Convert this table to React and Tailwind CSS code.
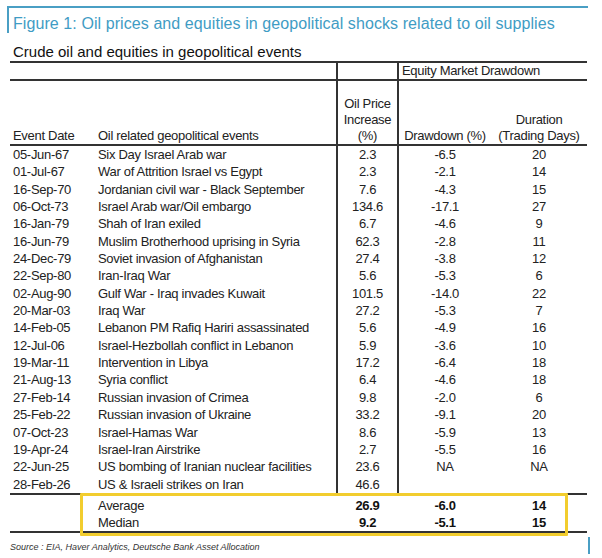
const rows = [
  ["05-Jun-67", "Six Day Israel Arab war", "2.3", "-6.5", "20"],
  ["01-Jul-67", "War of Attrition Israel vs Egypt", "2.3", "-2.1", "14"],
  ["16-Sep-70", "Jordanian civil war - Black September", "7.6", "-4.3", "15"],
  ["06-Oct-73", "Israel Arab war/Oil embargo", "134.6", "-17.1", "27"],
  ["16-Jan-79", "Shah of Iran exiled", "6.7", "-4.6", "9"],
  ["16-Jun-79", "Muslim Brotherhood uprising in Syria", "62.3", "-2.8", "11"],
  ["24-Dec-79", "Soviet invasion of Afghanistan", "27.4", "-3.8", "12"],
  ["22-Sep-80", "Iran-Iraq War", "5.6", "-5.3", "6"],
  ["02-Aug-90", "Gulf War - Iraq invades Kuwait", "101.5", "-14.0", "22"],
  ["20-Mar-03", "Iraq War", "27.2", "-5.3", "7"],
  ["14-Feb-05", "Lebanon PM Rafiq Hariri assassinated", "5.6", "-4.9", "16"],
  ["12-Jul-06", "Israel-Hezbollah conflict in Lebanon", "5.9", "-3.6", "10"],
  ["19-Mar-11", "Intervention in Libya", "17.2", "-6.4", "18"],
  ["21-Aug-13", "Syria conflict", "6.4", "-4.6", "18"],
  ["27-Feb-14", "Russian invasion of Crimea", "9.8", "-2.0", "6"],
  ["25-Feb-22", "Russian invasion of Ukraine", "33.2", "-9.1", "20"],
  ["07-Oct-23", "Israel-Hamas War", "8.6", "-5.9", "13"],
  ["19-Apr-24", "Israel-Iran Airstrike", "2.7", "-5.5", "16"],
  ["22-Jun-25", "US bombing of Iranian nuclear facilities", "23.6", "NA", "NA"],
  ["28-Feb-26", "US & Israeli strikes on Iran", "46.6", "", ""],
];

const summary = [
  ["Average", "26.9", "-6.0", "14"],
  ["Median", "9.2", "-5.1", "15"],
];

const cols = "grid grid-cols-[86px_240px_63px_92px_96px]";

const Line = () => <div className="h-[2px] bg-[#333]" />;

export default function App() {
  return (
    <div className="relative w-[602px] h-[558px] bg-white overflow-hidden font-['Liberation_Sans',Arial,sans-serif] text-[#222]">
      {/* figure title */}
      <div className="ml-[7px] mt-[6px] w-[581px] h-[27px] border-t-2 border-l-2 border-[#4a9fc4]">
        <div className="pl-[4px] pt-[6px] text-[16px] leading-[20px] tracking-[0.08px] text-[#3f9cc4] whitespace-nowrap">
          Figure 1: Oil prices and equities in geopolitical shocks related to oil supplies
        </div>
      </div>

      <div className="ml-[13px] mt-[10px] text-[15px] leading-[18px] text-[#111]">
        Crude oil and equities in geopolitical events
      </div>

      <div className="ml-[10px] w-[577px] text-[13px] tracking-[-0.3px]">
        <Line />
        <div className={`${cols} h-[16px]`}>
          <div />
          <div />
          <div className="border-x-2 border-[#333]" />
          <div className="col-span-2 pl-[3px] leading-[16px] whitespace-nowrap">Equity Market Drawdown</div>
        </div>
        <Line />
        <div className={`${cols} h-[63px] items-end`}>
          <div className="pl-[3px] leading-[17px]">Event Date</div>
          <div className="pl-[2px] leading-[17px]">Oil related geopolitical events</div>
          <div className="h-full flex flex-col justify-end items-center text-center border-x-2 border-[#333] leading-[16px]">
            <span>Oil Price</span>
            <span>Increase</span>
            <span>(%)</span>
          </div>
          <div className="text-center leading-[17px] whitespace-nowrap">Drawdown (%)</div>
          <div className="flex flex-col items-center leading-[16px] whitespace-nowrap">
            <span>Duration</span>
            <span>(Trading Days)</span>
          </div>
        </div>
        <Line />
        {rows.map((r) => (
          <div key={r[0]} className={`${cols} h-[17.35px] leading-[17.35px]`}>
            <div className="pl-[3px] whitespace-nowrap">{r[0]}</div>
            <div className="pl-[2px] whitespace-nowrap">{r[1]}</div>
            <div className="text-center border-x-2 border-[#333]">{r[2]}</div>
            <div className="text-center">{r[3]}</div>
            <div className="text-center">{r[4]}</div>
          </div>
        ))}
        <Line />
        <div className="pt-[2px]">
          {summary.map((s) => (
            <div key={s[0]} className={`${cols} h-[17px] leading-[17px]`}>
              <div />
              <div className="pl-[2px]">{s[0]}</div>
              <div className="text-center font-bold text-[#111]">{s[1]}</div>
              <div className="text-center font-bold text-[#111]">{s[2]}</div>
              <div className="text-center font-bold text-[#111]">{s[3]}</div>
            </div>
          ))}
        </div>
        <Line />
      </div>

      {/* highlight box over the summary rows */}
      <div className="absolute left-[80px] top-[493px] w-[488px] h-[43px] border-[3px] border-[#f2cd2e] rounded-[1px]" />

      <div className="flex items-end justify-between ml-[10px] w-[580px] mt-[4px]">
        <div className="pb-[1px] text-[9px] italic text-[#333] leading-[12px]">
          Source : EIA, Haver Analytics, Deutsche Bank Asset Allocation
        </div>
        <div className="w-[2px] h-[17px] bg-[#4a9fc4]" />
      </div>
    </div>
  );
}
